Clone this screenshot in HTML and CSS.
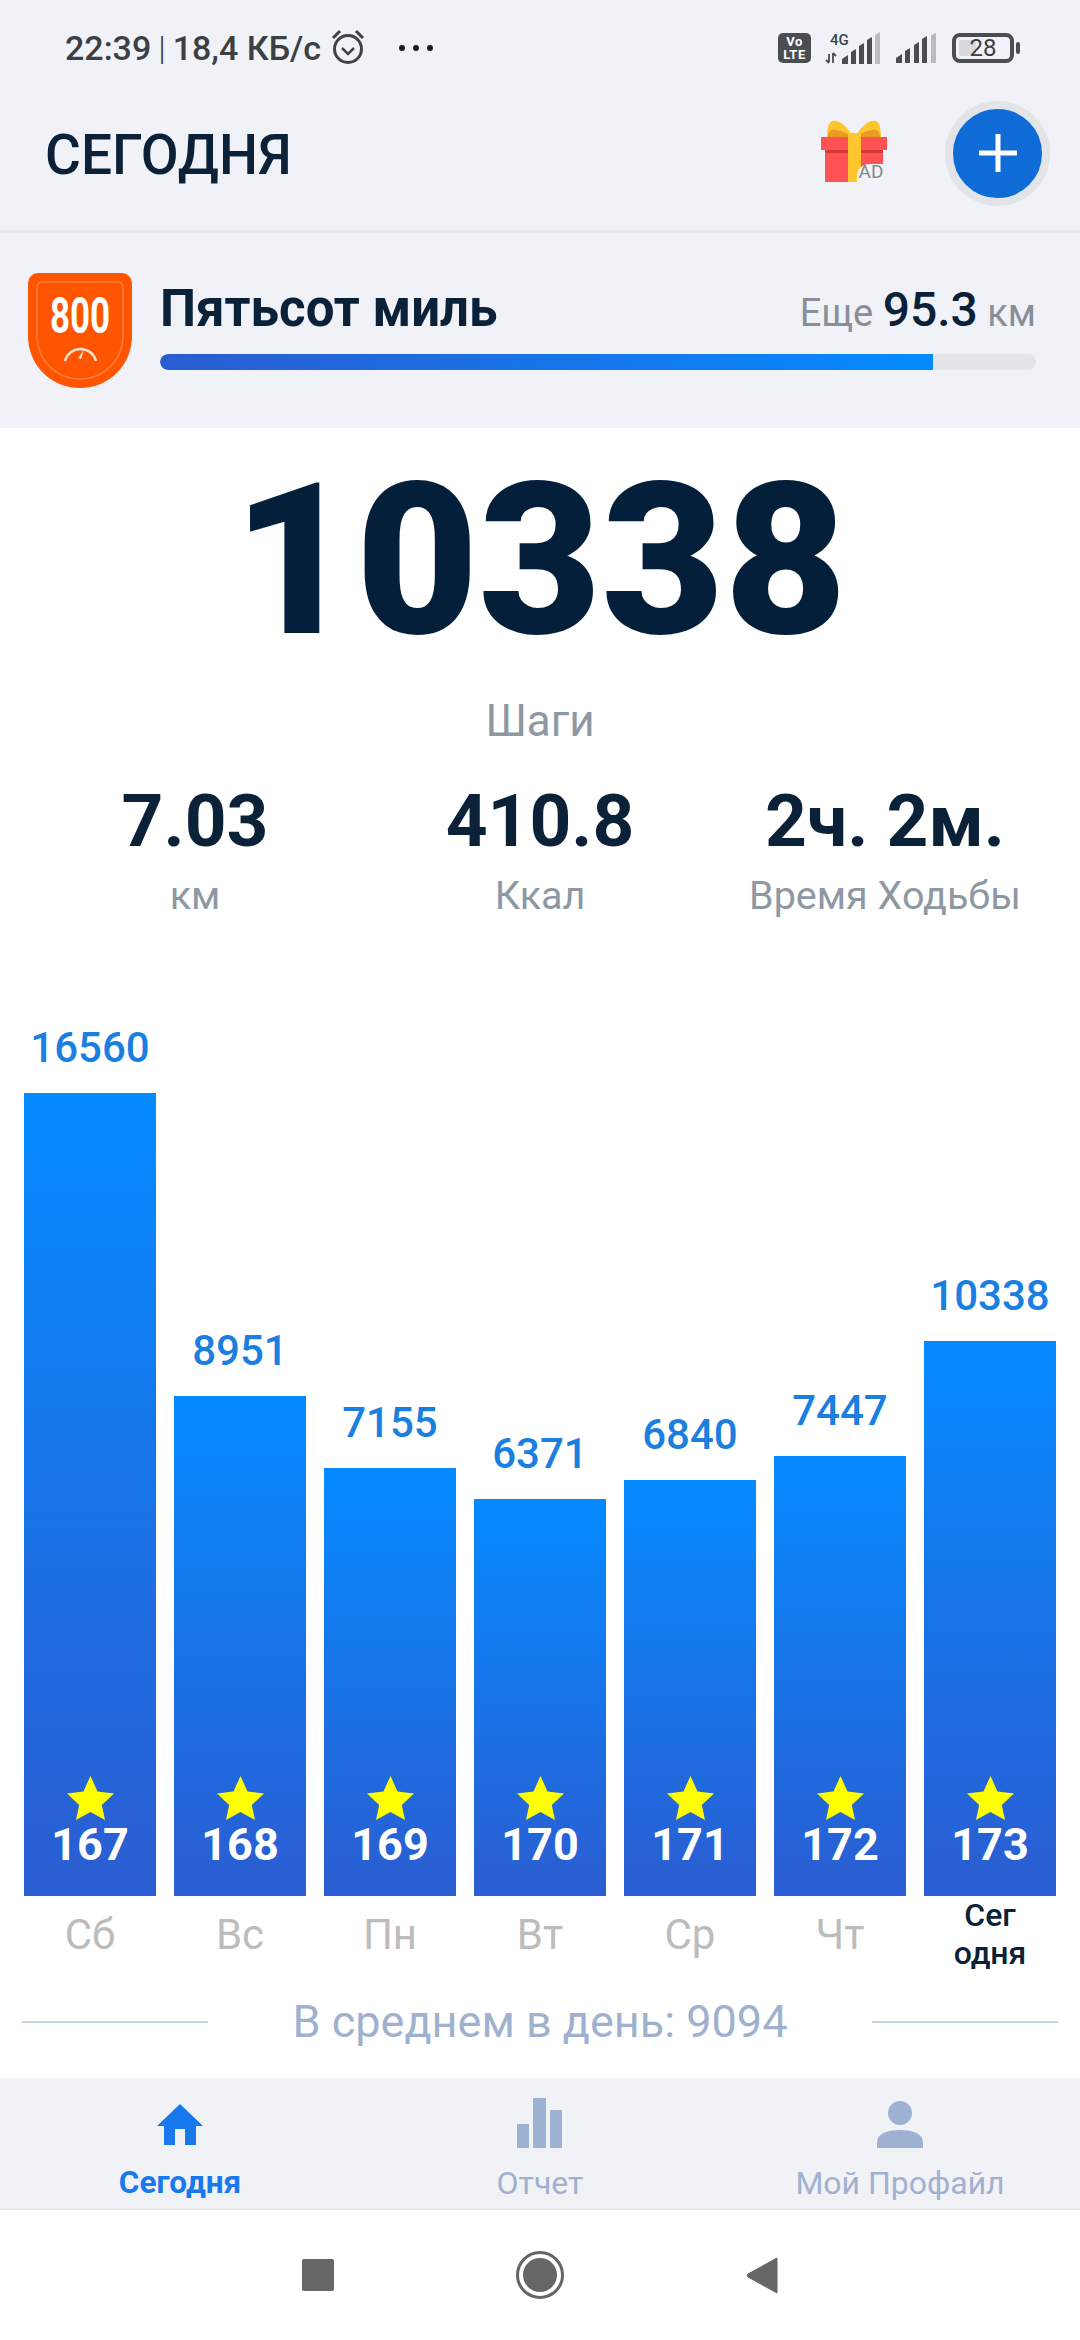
FILE: index.html
```html
<!DOCTYPE html>
<html lang="ru">
<head>
<meta charset="utf-8">
<title>Сегодня</title>
<link rel="stylesheet" href="styles.css">
</head>
<body>
<div class="app">
  <div class="status">
    <div class="status-left">
      <span class="status-text">22:39 <span class="pipe">|</span> 18,4 КБ/с</span>
      <svg class="alarm" width="34" height="36" viewBox="0 0 34 36"><circle cx="17" cy="20" r="13.500" fill="none" stroke="#3f4247" stroke-width="3"/><path d="M11 19l6 6 6-6" fill="none" stroke="#3f4247" stroke-width="2.500"/><path d="M2 9l7-7M32 9l-7-7" stroke="#3f4247" stroke-width="3" fill="none"/></svg>
      <span class="dots"><i></i><i></i><i></i></span>
    </div>
    <div class="status-right">
      <svg width="33" height="30" viewBox="0 0 33 30"><rect width="33" height="30" rx="5" fill="#4a4d52"/><text x="16.500" y="13" class="volte" text-anchor="middle">Vo</text><text x="16.500" y="26" class="volte" text-anchor="middle">LTE</text></svg>
      <svg class="sig1" width="58" height="32" viewBox="0 0 58 32"><text x="6" y="13" class="fourg">4G</text><path d="M5 22v8M2 28l3 3M9 31v-10M9 21l3 3" stroke="#4a4d52" stroke-width="1.800" fill="none"/><path d="M18 32v-5l6-4v9zM27 32V20l5-3v15zM35 32V14l5-3v21zM43 32V8l5-3v27z" fill="#4a4d52"/><path d="M51 32V3l5-3v32z" fill="#b9bbbe"/></svg>
      <svg class="sig2" width="40" height="30" viewBox="0 0 40 30"><path d="M0 30v-5l6-4v9zM9 30V18l5-3v15zM18 30V12l5-3v21zM26 30V6l5-3v27z" fill="#4a4d52"/><path d="M35 30V2l5-2v30z" fill="#b9bbbe"/></svg>
      <div class="battery"><span class="battery-fill"></span><span class="battery-num">28</span><span class="battery-nub"></span></div>
    </div>
  </div>

  <header class="header">
    <h1 class="title">СЕГОДНЯ</h1>
    <svg class="gift" width="66" height="62" viewBox="0 0 66 62">
      <path d="M33 18C26 6 18-1 11 1 7 3 6 10 6 18z" fill="#ffc52f"/>
      <path d="M33 18C40 6 48-1 55 1c4 2 5 9 5 17z" fill="#ffc52f"/>
      <path d="M7 17c0-6 4-9 9-7 7 2 12 4 17 7z" fill="#ec9a22"/>
      <path d="M59 17c0-6-4-9-9-7-7 2-12 4-17 7z" fill="#ec9a22"/>
      <rect x="4" y="30" width="58" height="32" fill="#ff5252"/>
      <rect x="4" y="30" width="58" height="3" fill="#d43a3a"/>
      <rect y="17" width="66" height="13" fill="#ff5252"/>
      <rect x="27" y="13" width="13" height="49" fill="#ffc52f"/>
      <path d="M36 62v-6a12 12 0 0 1 12-12h14v18z" fill="#f1f3f7"/>
      <text x="50" y="58" class="ad" text-anchor="middle">AD</text>
    </svg>
    <button class="add" type="button">
      <svg width="40" height="40" viewBox="0 0 40 40"><path d="M20 1v38M1 20h38" stroke="#fff" stroke-width="5" fill="none"/></svg>
    </button>
  </header>

  <section class="goal">
    <svg class="badge" width="104" height="115" viewBox="0 0 104 115">
      <path d="M10 0h84a10 10 0 0 1 10 10v53c0 29-23 52-52 52S0 92 0 63V10A10 10 0 0 1 10 0z" fill="#ff5500"/>
      <path d="M14 9h76a5 5 0 0 1 5 5v49c0 24-19 43-43 43S9 87 9 63V14a5 5 0 0 1 5-5z" fill="none" stroke="#ff7e3c" stroke-width="1.500"/>
      <text class="badge-num" transform="translate(52 60) scale(.7 1)" text-anchor="middle">800</text>
      <path d="M37 88a16 16 0 0 1 31 0" fill="none" stroke="#ffe3d3" stroke-width="2.500"/>
      <path d="M56 77l-3 9-3-1z" fill="#ffe3d3"/>
    </svg>
    <div class="goal-body">
      <div class="goal-top">
        <span class="goal-name">Пятьсот миль</span>
        <span class="goal-left">Еще <b>95.3</b> км</span>
      </div>
      <div class="track"><div class="fill"></div></div>
    </div>
  </section>

  <main class="main">
    <div class="hero">10338</div>
    <div class="hero-label">Шаги</div>
    <div class="stats">
      <div class="stat"><div class="stat-value">7.03</div><div class="stat-label">км</div></div>
      <div class="stat"><div class="stat-value">410.8</div><div class="stat-label">Ккал</div></div>
      <div class="stat"><div class="stat-value">2ч. 2м.</div><div class="stat-label">Время Ходьбы</div></div>
    </div>

    <div class="chart">
      <div class="col"><div class="col-value">16560</div><div class="bar" style="height:803px"><svg class="star" viewBox="0 0 47 44"><use href="#star"/></svg><span class="bar-num">167</span></div><div class="day">Сб</div></div>
      <div class="col"><div class="col-value">8951</div><div class="bar" style="height:500px"><svg class="star" viewBox="0 0 47 44"><use href="#star"/></svg><span class="bar-num">168</span></div><div class="day">Вс</div></div>
      <div class="col"><div class="col-value">7155</div><div class="bar" style="height:428px"><svg class="star" viewBox="0 0 47 44"><use href="#star"/></svg><span class="bar-num">169</span></div><div class="day">Пн</div></div>
      <div class="col"><div class="col-value">6371</div><div class="bar" style="height:397px"><svg class="star" viewBox="0 0 47 44"><use href="#star"/></svg><span class="bar-num">170</span></div><div class="day">Вт</div></div>
      <div class="col"><div class="col-value">6840</div><div class="bar" style="height:416px"><svg class="star" viewBox="0 0 47 44"><use href="#star"/></svg><span class="bar-num">171</span></div><div class="day">Ср</div></div>
      <div class="col"><div class="col-value">7447</div><div class="bar" style="height:440px"><svg class="star" viewBox="0 0 47 44"><use href="#star"/></svg><span class="bar-num">172</span></div><div class="day">Чт</div></div>
      <div class="col"><div class="col-value">10338</div><div class="bar" style="height:555px"><svg class="star" viewBox="0 0 47 44"><use href="#star"/></svg><span class="bar-num">173</span></div><div class="day day-today">Сег<br>одня</div></div>
    </div>

    <div class="average">
      <span class="avg-line"></span>
      <span class="avg-text">В среднем в день: 9094</span>
      <span class="avg-line"></span>
    </div>
  </main>

  <nav class="tabs">
    <div class="tab tab-active">
      <svg class="home-icon" width="50" height="42" viewBox="0 0 50 42"><path d="M25 0l23 22h-7v19H30V25H20v16H9V22H2z" fill="#1878ee"/></svg>
      <span class="tab-label">Сегодня</span>
    </div>
    <div class="tab">
      <svg width="48" height="50" viewBox="0 0 48 50"><path d="M1 26h12v24H1zM17 0h13v50H17zM34 12h12v38H34z" fill="#9db1d3"/></svg>
      <span class="tab-label">Отчет</span>
    </div>
    <div class="tab">
      <svg width="48" height="47" viewBox="0 0 48 47"><circle cx="24" cy="12" r="12" fill="#9db1d3"/><path d="M1 47V41C1 33 11 29 24 29s23 4 23 12v6z" fill="#9db1d3"/></svg>
      <span class="tab-label">Мой Профайл</span>
    </div>
  </nav>

  <div class="sysnav">
    <span class="sys-square"></span>
    <span class="sys-circle"><span class="sys-dot"></span></span>
    <svg width="32" height="37" viewBox="0 0 32 37"><path d="M31 1v35L2 20a2 2 0 0 1 0-3z" fill="#666" stroke="#666" stroke-width="1" stroke-linejoin="round"/></svg>
  </div>
</div>
<svg class="defs" width="0" height="0"><defs><path id="star" d="M23.500 0l7 15.500 16.500 2-12.200 11.500 3.200 15-14.500-8-14.500 8 3.200-15L0 17.500l16.500-2z" fill="#ffff00"/></defs></svg>
</body>
</html>
```

FILE: styles.css
```css
* { box-sizing: border-box; }
html, body { margin: 0; padding: 0; }
body { font-family: Roboto, "Noto Sans", sans-serif; background: #f0f2f7; }
.defs { position: absolute; }
.app { width: 1080px; height: 2340px; display: flex; flex-direction: column; overflow: hidden; }

.status { height: 70px; display: flex; justify-content: space-between; align-items: center; padding: 26px 60px 0 65px; flex: none; }
.status-left { display: flex; align-items: center; gap: 10px; }
.status-text { font-size: 34px; font-weight: 500; color: #3c3f44; line-height: 40px; white-space: nowrap; }
.pipe { font-weight: 300; margin: 0 -1.500px; }
.alarm { margin-top: -2px; }
.dots { display: flex; gap: 8px; margin-left: 24px; }
.dots i { width: 6px; height: 6px; border-radius: 50%; background: #1c1c1c; }
.status-right { display: flex; align-items: center; gap: 14px; }
.volte { font: 700 13px Roboto, sans-serif; fill: #fff; letter-spacing: 0.500px; }
.fourg { font: 500 15px Roboto, sans-serif; fill: #3c3f44; }
.sig1 { margin-left: -1px; }
.sig2 { margin-right: 2px; }
.battery { position: relative; width: 62px; height: 30px; border: 4px solid #4a4d52; border-radius: 8px; margin-right: 6px; display: flex; align-items: center; justify-content: center; }
.battery-fill { position: absolute; left: 3px; top: 3px; bottom: 3px; width: 17px; background: #d8dade; border-radius: 2px; }
.battery-num { position: relative; font-size: 24px; line-height: 22px; color: #3c3f44; }
.battery-nub { position: absolute; right: -10px; top: 5px; width: 4px; height: 12px; background: #4a4d52; border-radius: 2px; }

.header { height: 163px; flex: none; display: flex; align-items: center; padding: 10px 30px 0 45px; border-bottom: 3px solid #e8eaee; }
.title { margin: 0 auto 0 0; font-size: 55px; font-weight: 500; color: #0a2138; line-height: 60px; }
.gift { margin-right: 58px; margin-top: -8px; }
.ad { font: 400 19px Roboto, sans-serif; fill: #85888d; }
.add { width: 105px; height: 105px; border: 8px solid #e2e4e8; border-radius: 50%; background: #0f6bd6; padding: 0; display: flex; align-items: center; justify-content: center; margin-top: -4px; }

.goal { height: 195px; flex: none; display: flex; align-items: flex-start; padding: 40px 44px 0 28px; }
.badge { flex: none; margin-right: 28px; }
.badge-num { font: 700 50px Roboto, sans-serif; fill: #fff; }
.goal-body { flex: 1; display: flex; flex-direction: column; }
.goal-top { display: flex; justify-content: space-between; align-items: baseline; height: 81px; }
.goal-name { font-size: 51px; font-weight: 700; color: #0a2138; line-height: 60px; margin-top: 6px; }
.goal-left { font-size: 38px; color: #888f99; }
.goal-left b { font-size: 48px; font-weight: 500; color: #0a2138; }
.track { height: 16px; border-radius: 8px; background: #e2e4e7; overflow: hidden; }
.fill { width: 88.200%; height: 100%; border-radius: 8px 0 0 8px; background: linear-gradient(90deg, #2b5dd1, #058bff); }

.main { flex: none; height: 1650px; background: #fff; display: flex; flex-direction: column; }
.hero { height: 268px; line-height: 266px; text-align: center; font-size: 212px; font-weight: 900; color: #031f3a; }
.hero-label { height: 50px; line-height: 50px; text-align: center; font-size: 44px; color: #8e98a3; }
.stats { margin-top: 29px; display: grid; grid-template-columns: repeat(3, 345px); justify-content: center; text-align: center; }
.stat-value { line-height: 92px; font-size: 73px; font-weight: 700; color: #0a2138; white-space: nowrap; }
.stat-label { line-height: 58px; font-size: 39.500px; color: #8e98a3; white-space: nowrap; }

.chart { height: 976px; margin-top: 91px; padding: 0 24px; display: flex; gap: 18px; align-items: flex-end; }
.col { flex: 1; min-width: 0; display: flex; flex-direction: column; align-items: stretch; }
.col-value { line-height: 60px; margin-bottom: 15px; text-align: center; font-size: 42px; font-weight: 500; color: #1a7fe0; }
.bar { background: linear-gradient(180deg, #058bff, #2b5dd1); display: flex; flex-direction: column; justify-content: flex-end; align-items: center; padding-bottom: 26px; }
.star { width: 47px; height: 44px; flex: none; }
.bar-num { line-height: 50px; font-size: 45px; font-weight: 700; color: #fff; }
.day { height: 96px; line-height: 78px; text-align: center; font-size: 42px; color: #bcbcbc; }
.day-today { line-height: 38px; font-size: 32px; font-weight: 500; color: #0a2138; }

.average { height: 60px; display: flex; align-items: center; justify-content: space-between; padding: 0 22px; }
.avg-line { width: 186px; height: 2px; background: #c8d3e4; }
.avg-text { font-size: 45px; line-height: 60px; color: #a0b1d0; }

.tabs { height: 132px; flex: none; background: #f0f2f5; display: grid; grid-template-columns: repeat(3, 1fr); border-bottom: 2px solid #e6e8eb; }
.tab { display: flex; flex-direction: column; align-items: center; justify-content: flex-end; padding-bottom: 5px; }
.tab-label { font-size: 32px; line-height: 40px; margin-top: 15px; color: #a0b1d0; white-space: nowrap; }
.tab-active .tab-label { color: #1878ee; font-weight: 700; font-size: 31.500px; }
.home-icon { margin-bottom: 2px; }

.sysnav { flex: 1; background: #fff; display: flex; align-items: center; justify-content: center; gap: 182px; }
.sys-square { width: 32px; height: 32px; border-radius: 2px; background: #666; }
.sys-circle { width: 48px; height: 48px; border: 3px solid #666; border-radius: 50%; display: flex; align-items: center; justify-content: center; }
.sys-dot { width: 34px; height: 34px; border-radius: 50%; background: #666; }
```
